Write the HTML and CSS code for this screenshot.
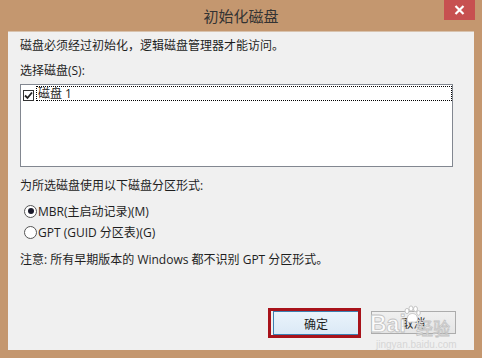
FILE: index.html
```html
<!DOCTYPE html>
<html>
<head>
<meta charset="utf-8">
<link rel="stylesheet" href="styles.css">
</head>
<body>
<div class="window">
  <div class="titlebar">
    <span class="title">初始化磁盘</span>
    <div class="close"><svg width="11" height="10" viewBox="0 0 11 10"><path d="M1.5 1 L9.5 9 M9.5 1 L1.5 9" stroke="#fff" stroke-width="2.2"/></svg></div>
  </div>
  <div class="content">
    <p class="line intro">磁盘必须经过初始化，逻辑磁盘管理器才能访问。</p>
    <p class="line label">选择磁盘(S):</p>
    <div class="listbox">
      <div class="item">
        <span class="check"><svg width="9" height="9" viewBox="0 0 9 9"><path d="M1 4.5 L3.5 7 L8 1.5" stroke="#222" stroke-width="1.8" fill="none"/></svg></span>
        <span class="itemtext">磁盘 1</span>
      </div>
    </div>
    <p class="line label2">为所选磁盘使用以下磁盘分区形式:</p>
    <div class="radios">
      <div class="radio"><span class="dot on"></span><span>MBR(主启动记录)(M)</span></div>
      <div class="radio"><span class="dot"></span><span>GPT (GUID 分区表)(G)</span></div>
    </div>
    <p class="line note">注意: 所有早期版本的 Windows 都不识别 GPT 分区形式。</p>
    <div class="spacer"></div>
    <div class="buttons">
      <button class="btn ok">确定</button>
      <button class="btn cancel">取消</button>
      <div class="watermark">
        <span class="wm-big">Bai</span>
        <svg class="wm-paw" width="20" height="20" viewBox="0 0 20 20"><g fill="#fff" stroke="#c4c4c4" stroke-width="1"><ellipse cx="5" cy="6" rx="2" ry="2.6"/><ellipse cx="9" cy="3.5" rx="2" ry="2.6"/><ellipse cx="13.5" cy="4" rx="2" ry="2.6"/><ellipse cx="16.5" cy="8" rx="1.8" ry="2.3"/><path d="M5 15 C5 10 8 8.5 10.5 8.5 C13.5 8.5 16 11 15.5 15 C15 18 11 17 10.5 17 C9 17 5 18.5 5 15 Z"/></g></svg>
        <span class="wm-cn">经验</span>
        <span class="wm-small">jingyan.baidu.com</span>
      </div>
    </div>
  </div>
</div>
</body>
</html>
```
FILE: styles.css
```css
* { box-sizing: border-box; }
html, body { margin: 0; padding: 0; }
body {
  width: 482px;
  height: 358px;
  overflow: hidden;
  font-family: "Open Sans", "Noto Sans CJK SC", sans-serif;
  font-size: 12px;
  color: #1e1e1e;
}
.window {
  width: 482px;
  height: 358px;
  background: #c4976f;
  display: flex;
  flex-direction: column;
}
.titlebar {
  position: relative;
  height: 31px;
  display: flex;
  align-items: center;
  justify-content: center;
}
.title {
  font-family: "Noto Sans CJK SC", sans-serif;
  font-size: 15px;
  color: #333;
}
.close {
  position: absolute;
  top: 0;
  left: 444px;
  width: 31px;
  height: 20px;
  background: #c75050;
  display: flex;
  align-items: center;
  justify-content: center;
}
.content {
  flex: 1;
  margin: 0 8px 8px 8px;
  background: #f0f0f0;
  padding: 6px 18px 15px 12px;
  display: flex;
  flex-direction: column;
  border-top: 1px solid #d8c2ad;
}
.line {
  margin: 0;
  line-height: 18px;
  height: 18px;
  white-space: nowrap;
}
.intro { margin-top: -1px; }
.label { margin-top: 7px; }
.listbox {
  margin-top: 4px;
  width: 433px;
  height: 83px;
  background: #fff;
  border: 1px solid #828790;
  padding: 1px 0 0 2px;
}
.item {
  height: 15px;
  display: flex;
  align-items: center;
}
.check {
  width: 11px;
  height: 11px;
  border: 1px solid #333;
  background: #fff;
  display: flex;
  align-items: center;
  justify-content: center;
  margin-top: 4px;
}
.itemtext {
  flex: 1;
  height: 15px;
  line-height: 13px;
  border: 1px dotted #000;
  margin-left: 2px;
  padding-left: 1px;
}
.label2 { margin-top: 10px; }
.radios {
  margin-top: 7px;
  display: flex;
  flex-direction: column;
  gap: 3px;
}
.radio {
  display: flex;
  align-items: center;
  height: 18px;
  padding-left: 4px;
}
.dot {
  width: 13px;
  height: 13px;
  border-radius: 50%;
  border: 1px solid #555;
  background: #fff;
  margin-right: 1px;
  position: relative;
}
.dot.on::after {
  content: "";
  position: absolute;
  left: 2.5px;
  top: 2.5px;
  width: 6px;
  height: 6px;
  border-radius: 50%;
  background: #1a1a2a;
}
.note { margin-top: 10px; }
.spacer { flex: 1; }
.buttons {
  position: relative;
  display: flex;
  justify-content: flex-end;
  gap: 12px;
}
.btn {
  font-family: "Noto Sans CJK SC", sans-serif;
  font-size: 12px;
  color: #1e1e1e;
  height: 24px;
  padding: 0;
  background: linear-gradient(#f0f0f0, #e5e5e5);
  border: 1px solid #acacac;
}
.ok {
  width: 86px;
  border-color: #3c7fb1;
  background: linear-gradient(#eaf3fb, #dbe9f6);
  position: relative;
}
.ok::before {
  content: "";
  position: absolute;
  left: -6px;
  right: -3px;
  top: -4px;
  bottom: -4px;
  border: 3px solid #a8121a;
}
.cancel {
  width: 85px;
  height: 23px;
  margin-bottom: 1px;
  color: #333;
}
.watermark {
  position: absolute;
  left: 348px;
  top: -10px;
  width: 100px;
  height: 50px;
  pointer-events: none;
  color: rgba(255,255,255,0.85);
  font-family: "Liberation Sans", sans-serif;
  -webkit-text-stroke: 0.8px #c2c2c2;
}
.wm-big { position: absolute; left: 2px; top: 10px; font-size: 23px; font-weight: bold; }
.wm-paw { position: absolute; left: 34px; top: 4px; }
.wm-cn { position: absolute; left: 48px; top: 14px; font-size: 17px; font-family: "Noto Sans CJK SC", sans-serif; }
.wm-small { position: absolute; left: 8px; top: 38px; font-size: 10px; white-space: nowrap; -webkit-text-stroke: 0; color: #d6d6d6; }
```
